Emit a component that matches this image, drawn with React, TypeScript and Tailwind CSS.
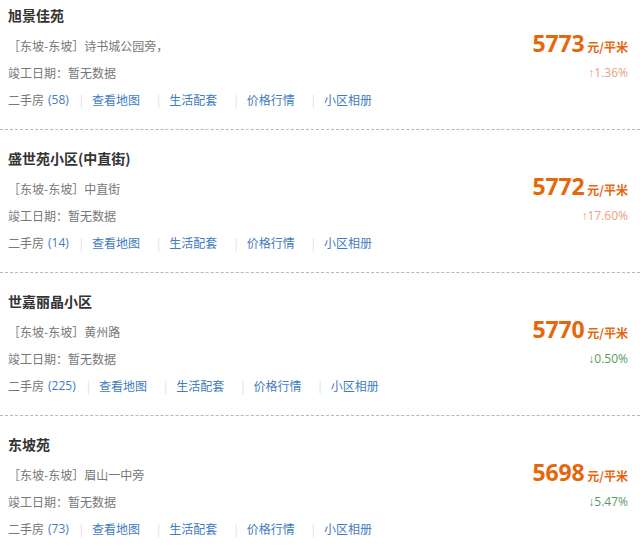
import React from "react";

type Estate = {
  name: string;
  addr: string;
  count: number;
  price: number;
  change: string;
  up: boolean;
};

const estates: Estate[] = [
  { name: "旭景佳苑", addr: "诗书城公园旁，", count: 58, price: 5773, change: "1.36%", up: true },
  { name: "盛世苑小区(中直街)", addr: "中直街", count: 14, price: 5772, change: "17.60%", up: true },
  { name: "世嘉丽晶小区", addr: "黄州路", count: 225, price: 5770, change: "0.50%", up: false },
  { name: "东坡苑", addr: "眉山一中旁", count: 73, price: 5698, change: "5.47%", up: false },
];

const links = ["查看地图", "生活配套", "价格行情", "小区相册"];

function Sep() {
  return <span className="ml-[11px] mr-[9px] text-[12px] text-[#e0e0e0]">|</span>;
}

function EstateItem({ e, first }: { e: Estate; first: boolean }) {
  return (
    <div
      className={`${first ? "pt-[5px]" : "pt-[18px]"} pb-[19px] px-2 border-b border-dashed border-[#b8b8b8]`}
    >
      <div className="h-5 flex items-center text-[14px] font-bold text-[#333]">{e.name}</div>

      <div className="mt-[11px] h-5 flex items-center justify-between">
        <span className="text-[12px] text-[#777]">［东坡-东坡］{e.addr}</span>
        <span className="flex items-baseline text-[#e4670c] font-bold -translate-y-0.5 pr-[4px]">
          <span className="text-[23px] leading-5 tracking-[-0.2px] font-['Open_Sans',sans-serif]">{e.price}</span>
          <span className="ml-[3px] text-[12px]">元/平米</span>
        </span>
      </div>

      <div className="mt-[7px] h-5 flex items-center justify-between">
        <span className="text-[12px] text-[#777]">竣工日期：暂无数据</span>
        <span
          className={`pr-[4px] text-[12px] font-['Open_Sans',sans-serif] ${
            e.up ? "text-[#e8a07f]" : "text-[#5d9a5d]"
          }`}
        >
          {e.up ? "↑" : "↓"}
          {e.change}
        </span>
      </div>

      <div className="mt-[7px] h-5 flex items-center text-[12px]">
        <span className="text-[#777]">二手房</span>
        <span className="ml-1 text-[#3f7cc0] font-['Open_Sans',sans-serif]">({e.count})</span>
        {links.map((l, i) => (
          <React.Fragment key={l}>
            <Sep />
            <span className={`text-[#3f7cc0] ${i < links.length - 1 ? "mr-[6px]" : ""}`}>{l}</span>
          </React.Fragment>
        ))}
      </div>
    </div>
  );
}

export default function App() {
  return (
    <div className="w-[640px] h-[549px] overflow-hidden bg-white font-['Noto_Sans_CJK_SC',sans-serif]">
      {estates.map((e, i) => (
        <EstateItem key={e.name} e={e} first={i === 0} />
      ))}
    </div>
  );
}
